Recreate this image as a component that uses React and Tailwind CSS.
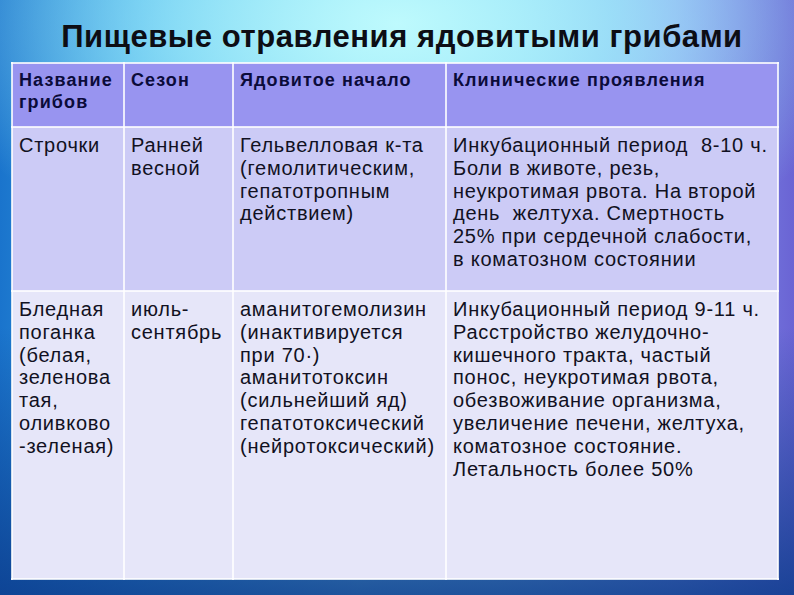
const rows = [
  {
    h: 'h-[164px]',
    bg: 'bg-[#cccbf6]',
    cells: [
      ['Строчки'],
      ['Ранней', 'весной'],
      ['Гельвелловая к-та', '(гемолитическим,', 'гепатотропным', 'действием)'],
      [
        'Инкубационный период \u00a08-10 ч.',
        'Боли в животе, резь,',
        'неукротимая рвота. На второй',
        'день \u00a0желтуха. Смертность',
        '25% при сердечной слабости,',
        'в коматозном состоянии',
      ],
    ],
  },
  {
    h: 'h-[288px]',
    bg: 'bg-[#e6e6f9]',
    cells: [
      ['Бледная', 'поганка', '(белая,', 'зеленова', 'тая,', 'оливково', '-зеленая)'],
      ['июль-', 'сентябрь'],
      [
        'аманитогемолизин',
        '(инактивируется',
        'при 70·)',
        'аманитотоксин',
        '(сильнейший яд)',
        'гепатотоксический',
        '(нейротоксический)',
      ],
      [
        'Инкубационный период 9-11 ч.',
        'Расстройство желудочно-',
        'кишечного тракта, частый',
        'понос, неукротимая рвота,',
        'обезвоживание организма,',
        'увеличение печени, желтуха,',
        'коматозное состояние.',
        'Летальность более 50%',
      ],
    ],
  },
];

const headers = [['Название', 'грибов'], ['Сезон'], ['Ядовитое начало'], ['Клинические проявления']];

export default function App() {
  return (
    <div
      className="w-[794px] h-[595px] overflow-hidden flex flex-col items-center font-['Liberation_Sans',Arial,sans-serif] bg-[radial-gradient(ellipse_60%_45%_at_50%_4%,rgba(190,250,253,1)_0%,rgba(160,236,250,0.75)_45%,rgba(160,236,250,0)_100%),linear-gradient(to_bottom,rgba(10,50,130,0)_0%,rgba(10,50,130,0)_55%,rgba(12,60,140,0.85)_100%),linear-gradient(to_right,#1a74cc_0%,#3ea8e8_18%,#86dcf4_45%,#8ccff4_65%,#8a9cee_85%,#6a64d4_100%)]"
    >
      <h1 className="mt-[19px] ml-[10px] text-[31px] leading-[36px] font-bold text-[#0d0d14] tracking-[0.55px]">
        Пищевые отравления ядовитыми грибами
      </h1>
      <table className="mt-[7px] self-start ml-[11px] w-[766px] table-fixed border-collapse border-2 border-white/90">
        <colgroup>
          <col className="w-[112px]" />
          <col className="w-[109px]" />
          <col className="w-[213px]" />
          <col className="w-[332px]" />
        </colgroup>
        <thead>
          <tr className="h-[64px] bg-[#9894f0]">
            {headers.map((lines, i) => (
              <th
                key={i}
                className="border-2 border-white/80 align-top text-left font-bold text-[18px] leading-[22px] tracking-[1.1px] text-[#0b0b3a] px-[6px] pt-[5px] whitespace-nowrap"
              >
                {lines.map((l, j) => (
                  <div key={j}>{l}</div>
                ))}
              </th>
            ))}
          </tr>
        </thead>
        <tbody>
          {rows.map((row, r) => (
            <tr key={r} className={`${row.h} ${row.bg}`}>
              {row.cells.map((lines, i) => (
                <td
                  key={i}
                  className="border-2 border-white/80 align-top text-[20px] leading-[22.8px] tracking-[0.75px] text-[#111122] px-[6px] pt-[6px] whitespace-nowrap"
                >
                  {lines.map((l, j) => (
                    <div key={j}>{l}</div>
                  ))}
                </td>
              ))}
            </tr>
          ))}
        </tbody>
      </table>
    </div>
  );
}
